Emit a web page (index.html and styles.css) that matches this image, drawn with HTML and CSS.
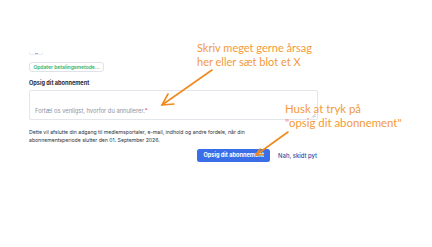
FILE: index.html
```html
<!DOCTYPE html>
<html lang="da">
<head>
<meta charset="utf-8">
<link rel="stylesheet" href="styles.css">
</head>
<body>
<main class="page">
  <div class="stub"><span class="stub-dot"></span></div>
  <button class="update">Opdater betalingsmetode...</button>
  <h3 class="label">Opsig dit abonnement</h3>
  <div class="textarea">
    <span class="ph">Fortæl os venligst, hvorfor du annullerer.<span class="req">*</span></span>
    <svg class="grip" width="5" height="5" viewBox="0 0 5 5"><path d="M4.5 1 L1 4.5 M4.5 3 L3 4.5" stroke="#9aa0a8" stroke-width="0.7" fill="none"/></svg>
  </div>
  <p class="info">Dette vil afslutte din adgang til medlemsportaler, e-mail, indhold og andre fordele, når din abonnementsperiode slutter den 01. September 2026.</p>
  <div class="actions">
    <button class="cancel">Opsig dit abonnement</button>
    <a class="nah" href="#">Nah, skidt pyt</a>
  </div>

  <div class="note note1">Skriv meget gerne årsag<br>her eller sæt blot et X</div>
  <div class="note note2">Husk at tryk på<br>"opsig dit abonnement"</div>
  <svg class="arrows" width="432" height="247" viewBox="0 0 432 247">
    <g stroke="#f08a1c" stroke-width="1.6" fill="none" stroke-linecap="round" stroke-linejoin="round">
      <path d="M212 70 L162 105"/>
      <path d="M168 94 L162 105 L174 104"/>
      <path d="M288 132 L256 155"/>
      <path d="M260 149 L256 155 L263 154.5"/>
    </g>
  </svg>
</main>
</body>
</html>
```
FILE: styles.css
```css
* { box-sizing: border-box; }
html, body { margin: 0; padding: 0; background: #fff; }
body { font-family: Inter, "Noto Sans", sans-serif; color: #1f2937; }
.page {
  position: relative;
  width: 432px;
  height: 247px;
  padding: 52px 0 0 29px;
  overflow: hidden;
}
.stub {
  width: 14px;
  height: 3px;
  border: 1px solid #e8eaf2;
  border-top: none;
  border-radius: 0 0 2px 2px;
  display: flex;
  justify-content: center;
}
.stub-dot { width: 3px; height: 1px; background: #9aaee8; margin-top: 0.5px; }
.update {
  display: block;
  margin: 7px 0 0 0;
  width: 75px;
  height: 10px;
  padding: 0;
  border: 1px solid #dfe3e8;
  border-radius: 3px;
  background: #fff;
  color: #27b472;
  font-family: Inter, sans-serif;
  font-size: 5px;
  font-weight: 600;
  line-height: 8px;
  text-align: center;
  white-space: nowrap;
}
.label {
  margin: 8px 0 0 0;
  font-size: 5.6px;
  font-weight: 700;
  line-height: 7px;
  color: #1f2937;
}
.textarea {
  position: relative;
  margin-top: 3px;
  width: 289px;
  height: 30px;
  border: 1px solid #e3e6ea;
  border-radius: 2px;
  padding: 6px 5px;
}
.ph { font-size: 5.75px; color: #8b929c; line-height: 6px; }
.req { color: #e5484d; }
.grip { position: absolute; right: 1px; bottom: 1px; }
.info {
  margin: 8px 0 0 0;
  width: 250px;
  font-size: 5.15px;
  line-height: 8px;
  color: #2b3440;
}
.actions {
  display: flex;
  justify-content: flex-end;
  align-items: center;
  gap: 8px;
  width: 288px;
  margin-top: 5px;
}
.cancel {
  width: 73px;
  height: 13px;
  padding: 0;
  border: none;
  border-radius: 2.5px;
  background: #3a6ee8;
  color: #fff;
  font-family: Inter, sans-serif;
  font-size: 5.6px;
  font-weight: 700;
  line-height: 13px;
  text-align: center;
  white-space: nowrap;
}
.nah {
  color: #2f4fa8;
  font-size: 5.9px;
  font-weight: 500;
  text-decoration: none;
}
.note {
  position: absolute;
  font-family: Lato, "Open Sans", sans-serif;
  color: #f39a3a;
  font-size: 11px;
  line-height: 14px;
  white-space: nowrap;
}
.note1 { left: 197px; top: 41px; }
.note2 { left: 285px; top: 102px; font-size: 11.4px; }
.arrows { position: absolute; left: 0; top: 0; pointer-events: none; }
```
